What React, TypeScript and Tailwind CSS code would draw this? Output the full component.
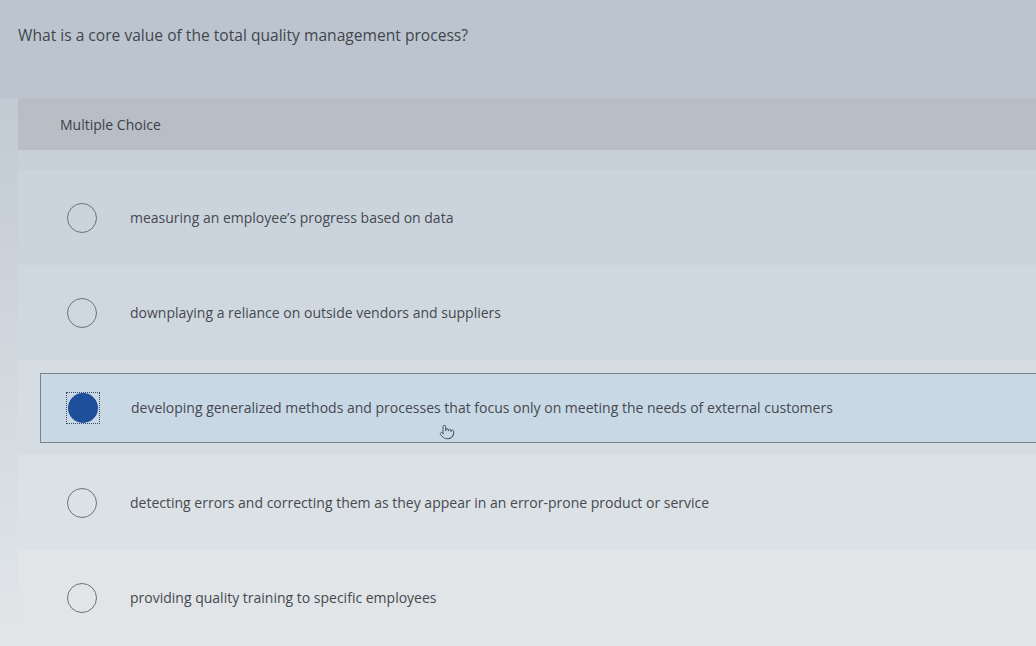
import React from "react";
import { Pointer } from "lucide-react";

const options = [
  { text: "measuring an employee\u2019s progress based on data", bg: "bg-[#cbd4dc]" },
  { text: "downplaying a reliance on outside vendors and suppliers", bg: "bg-[#d0d8df]" },
  {
    text: "developing generalized methods and processes that focus only on meeting the needs of external customers",
    bg: "bg-[#d6dde2]",
    selected: true,
  },
  { text: "detecting errors and correcting them as they appear in an error-prone product or service", bg: "bg-[#dce1e5]" },
  { text: "providing quality training to specific employees", bg: "bg-[#e1e5e8]" },
];

const Radio = ({ selected }: { selected?: boolean }) =>
  selected ? (
    <div className="w-[34px] h-[32px] border border-dotted border-[#3b4a66] flex items-center justify-center">
      <div className="w-[30px] h-[30px] rounded-full bg-[#1d4f9b]" />
    </div>
  ) : (
    <div className="w-[30px] h-[30px] rounded-full border-[1.5px] border-[#6d7278]" />
  );

export default function App() {
  return (
    <div
      className="w-[1036px] h-[646px] overflow-hidden bg-linear-to-b from-[#bcc5cf] to-[#e2e6e9] text-[#41464d]"
      style={{ fontFamily: "'Open Sans', Lato, sans-serif" }}
    >
      {/* Question */}
      <div className="h-[98px] pl-[18px] pt-[25px] bg-[#bcc5cf]">
        <p className="text-[15.6px] leading-[20px]">
          What is a core value of the total quality management process?
        </p>
      </div>

      <div className="ml-[18px]">
        {/* Header */}
        <div className="h-[52px] bg-[#b8bec6] flex items-center pl-[42px]">
          <span className="text-[14px] text-[#3c4047]">Multiple Choice</span>
        </div>
        <div className="h-[20px] bg-[#c7cfd7]" />

        {/* Options */}
        <div className="flex flex-col">
          {options.map((o, i) => (
            <div key={i} className={`h-[95px] ${o.bg} flex items-center`}>
              {o.selected ? (
                <div className="relative ml-[22px] flex-1 h-[70px] border border-[#7a838d] border-r-0 bg-[#c9d8e5] flex items-center">
                  <div className="ml-[25px] w-[65px] flex">
                    <Radio selected />
                  </div>
                  <span className="text-[14px] text-[#454950]">{o.text}</span>
                  <Pointer
                    className="absolute left-[398px] top-[50px] text-[#555a60]"
                    size={16}
                    strokeWidth={1.5}
                  />
                </div>
              ) : (
                <>
                  <div className="ml-[49px] w-[63px] flex">
                    <Radio />
                  </div>
                  <span className="text-[14px] text-[#454950]">{o.text}</span>
                </>
              )}
            </div>
          ))}
        </div>
      </div>
    </div>
  );
}
